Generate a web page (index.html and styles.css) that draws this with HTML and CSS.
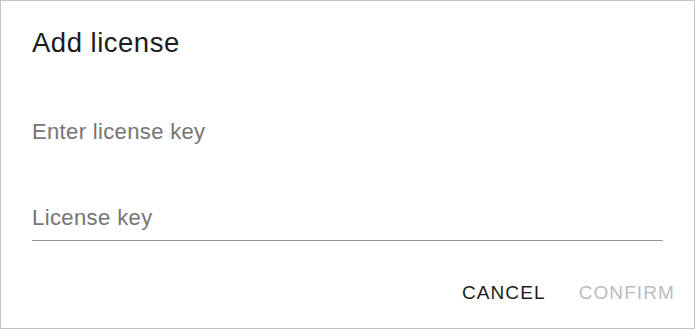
FILE: index.html
```html
<!DOCTYPE html>
<html lang="en">
<head>
<meta charset="utf-8">
<title>Add license</title>
<link rel="stylesheet" href="styles.css">
</head>
<body>
<div class="dialog">
  <h2 class="dialog-title">Add license</h2>
  <p class="dialog-text">Enter license key</p>
  <div class="field">
    <input class="field-input" type="text" placeholder="License key">
  </div>
  <div class="actions">
    <button class="btn btn-cancel" type="button">Cancel</button>
    <button class="btn btn-confirm" type="button" disabled>Confirm</button>
  </div>
</div>
</body>
</html>
```

FILE: styles.css
```css
html, body {
  margin: 0;
  padding: 0;
  background: #ffffff;
}

.dialog {
  box-sizing: border-box;
  width: 695px;
  height: 329px;
  border: 1px solid #c4c4c4;
  padding: 0 31px;
  display: flex;
  flex-direction: column;
  font-family: "Liberation Sans", Arial, sans-serif;
  background: #ffffff;
}

.dialog-title {
  margin: 26px 0 0;
  font-size: 27.5px;
  line-height: 32px;
  font-weight: 400;
  letter-spacing: 0.5px;
  color: #1c1c1c;
}

.dialog-text {
  margin: 60px 0 0;
  font-size: 22px;
  line-height: 26px;
  letter-spacing: 0.35px;
  color: #757575;
}

.field {
  margin-top: 60px;
}

.field-input {
  box-sizing: border-box;
  display: block;
  width: 100%;
  margin: 0;
  padding: 0 0 9px;
  border: 0;
  border-bottom: 1px solid #949494;
  outline: none;
  background: transparent;
  font-family: "Liberation Sans", Arial, sans-serif;
  font-size: 22px;
  line-height: 26px;
  letter-spacing: 0.4px;
  height: 36px;
  color: #212121;
}

.field-input::placeholder {
  color: #757575;
  opacity: 1;
}

.actions {
  display: flex;
  justify-content: flex-end;
  gap: 11px;
  margin: 39px -23px 0 0;
}

.btn {
  margin: 0;
  padding: 0 11px;
  border: 0;
  background: transparent;
  font-family: "Liberation Sans", Arial, sans-serif;
  font-size: 19px;
  line-height: 26px;
  letter-spacing: 1.1px;
  text-transform: uppercase;
  cursor: pointer;
}

.btn-cancel {
  color: #1c1c1c;
}

.btn-confirm {
  color: #bdbdbd;
  cursor: default;
}
```
